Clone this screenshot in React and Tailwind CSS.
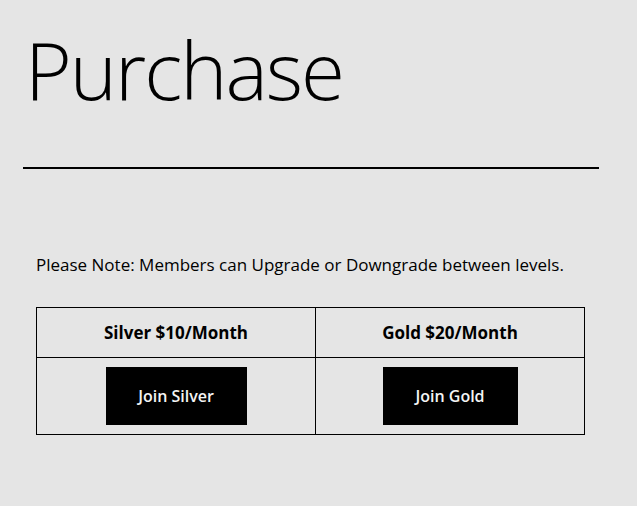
export default function App() {
  return (
    <div className="min-h-screen bg-[#e5e5e5] text-black font-['Open_Sans',sans-serif]">
      <div className="pl-[23px] pt-[19px]">
        <h1 className="text-[80px] font-light leading-[100px] pl-[2px] tracking-[-2px]">Purchase</h1>
        <div className="mt-[48px] h-[2px] w-[576px] bg-black" />
      </div>
      <div className="pl-[36px] pt-[84px]">
        <p className="text-[17px] leading-[24px]">Please Note: Members can Upgrade or Downgrade between levels.</p>
        <div className="mt-[30px] w-[549px] border border-black grid grid-cols-[279px_268px]">
          <div className="h-[50px] border-r border-b border-black flex items-center justify-center font-bold text-[17px]">Silver $10/Month</div>
          <div className="h-[50px] border-b border-black flex items-center justify-center font-bold text-[17px]">Gold $20/Month</div>
          <div className="h-[76px] border-r border-black flex items-center justify-center">
            <button className="h-[58px] w-[141px] bg-black text-[#f4f4f4] text-[16px] font-semibold">Join Silver</button>
          </div>
          <div className="h-[76px] flex items-center justify-center">
            <button className="h-[58px] w-[135px] bg-black text-[#f4f4f4] text-[16px] font-semibold">Join Gold</button>
          </div>
        </div>
      </div>
    </div>
  );
}
